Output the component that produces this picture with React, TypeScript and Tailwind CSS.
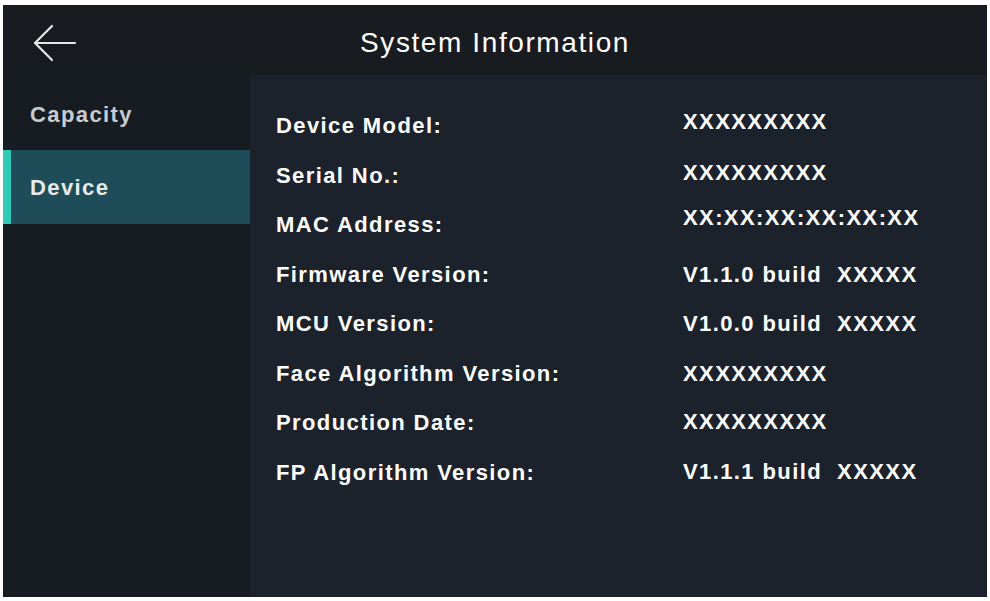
type Row = { label: string; value: string; lift: string };

// value column sits a few px higher than its label on some rows
const rows: Row[] = [
  { label: 'Device Model:', value: 'XXXXXXXXX', lift: '-mt-[8px]' },
  { label: 'Serial No.:', value: 'XXXXXXXXX', lift: '-mt-[6px]' },
  { label: 'MAC Address:', value: 'XX:XX:XX:XX:XX:XX', lift: '-mt-[14px]' },
  { label: 'Firmware Version:', value: 'V1.1.0 build  XXXXX', lift: 'mt-0' },
  { label: 'MCU Version:', value: 'V1.0.0 build  XXXXX', lift: 'mt-0' },
  { label: 'Face Algorithm Version:', value: 'XXXXXXXXX', lift: 'mt-0' },
  { label: 'Production Date:', value: 'XXXXXXXXX', lift: '-mt-[2px]' },
  { label: 'FP Algorithm Version:', value: 'V1.1.1 build  XXXXX', lift: '-mt-[2px]' },
];

const tabs = ['Capacity', 'Device'];

function BackArrow() {
  return (
    <svg width="44" height="38" viewBox="0 0 44 38" fill="none" stroke="#e8e8e8" strokeWidth="2.2" strokeLinecap="round" strokeLinejoin="round">
      <path d="M2 19 H42" />
      <path d="M19 2 L2 19 L19 36" />
    </svg>
  );
}

export default function App() {
  const active = 'Device';

  return (
    <div className="w-[990px] h-[601px] bg-white pt-[5px] pl-[3px] pr-[3px] pb-[4px] font-['Liberation_Sans',Arial,sans-serif]">
      <div className="flex h-full flex-col bg-[#171b21] text-[#f2f2f2]">
        {/* title bar */}
        <div className="relative flex h-[70px] shrink-0 items-center justify-center bg-[#181b1f]">
          <button className="absolute left-[30px] top-[19px]">
            <BackArrow />
          </button>
          <h1 className="mt-[6px] text-[28px] tracking-[1.6px] text-white">System Information</h1>
        </div>

        <div className="flex flex-1">
          {/* side menu */}
          <div className="flex w-[247px] shrink-0 flex-col pt-[4px] bg-[#171b22]">
            {tabs.map((t) => (
              <div
                key={t}
                className={
                  t === active
                    ? 'flex h-[74px] items-center border-l-[8px] border-[#2fcbb4] bg-[#1e4c58] pl-[19px] text-[22px] font-bold tracking-[1.4px] text-[#e8eaea]'
                    : 'flex h-[71px] items-center pl-[27px] text-[22px] font-bold tracking-[1.4px] text-[#c9cccf]'
                }
              >
                {t}
              </div>
            ))}
          </div>

          {/* info list */}
          <div className="flex-1 bg-[#1b222c] pl-[26px] pt-[26px]">
            {rows.map((r) => (
              <div key={r.label} className="flex h-[49.5px] items-center text-[22px] font-bold tracking-[1.4px] text-white">
                <span className="w-[407px] shrink-0">{r.label}</span>
                <span className={`whitespace-pre ${r.lift}`}>{r.value}</span>
              </div>
            ))}
          </div>
        </div>
      </div>
    </div>
  );
}
